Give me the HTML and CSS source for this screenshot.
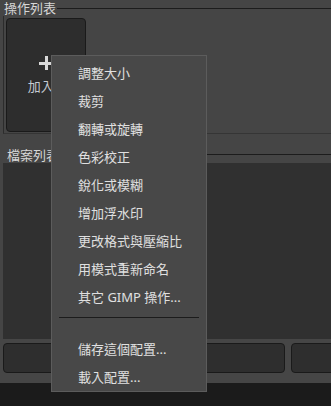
FILE: index.html
```html
<!DOCTYPE html>
<html lang="zh-Hant">
<head>
  <meta charset="UTF-8">
  <title>批次處理</title>
  <link rel="stylesheet" href="styles.css">
</head>
<body>

  <div class="group ops">
    <div class="group-title">
      <span>操作列表</span>
      <i class="rule"></i>
    </div>
    <div class="group-body">
      <button class="add-btn">
        <span class="plus"></span>
        <span class="add-label">加入...</span>
      </button>
    </div>
  </div>

  <div class="group files">
    <div class="group-title">
      <span>檔案列表</span>
      <i class="rule"></i>
    </div>
    <div class="file-list"></div>
    <div class="actions">
      <button class="act-btn"></button>
      <button class="act-btn"></button>
      <button class="act-btn"></button>
    </div>
  </div>

  <div class="statusbar"></div>

  <ul class="context-menu">
    <li>調整大小</li>
    <li>裁剪</li>
    <li>翻轉或旋轉</li>
    <li>色彩校正</li>
    <li>銳化或模糊</li>
    <li>增加浮水印</li>
    <li>更改格式與壓縮比</li>
    <li>用模式重新命名</li>
    <li>其它 GIMP 操作...</li>
    <li class="sep"></li>
    <li>儲存這個配置...</li>
    <li>載入配置...</li>
  </ul>

</body>
</html>
```

FILE: styles.css
```css
* {
  box-sizing: border-box;
}

body {
  margin: 0;
  width: 331px;
  height: 406px;
  overflow: hidden;
  background: #454545;
  color: #d6d6d6;
  font-family: "Noto Sans", "Noto Sans CJK TC", sans-serif;
  font-size: 13px;
  position: relative;
}

.group-title {
  display: flex;
  align-items: flex-start;
  height: 16px;
  line-height: 16px;
  white-space: nowrap;
}

.group-title span {
  padding-right: 1px;
}

.rule {
  flex: 1;
  height: 1px;
  margin-top: 8px;
  background: #1c1c1c;
}

.ops .group-title {
  padding-left: 4px;
}

.group-body {
  margin-left: 3px;
  padding: 2px 0 1px 2px;
  border-left: 1px solid #2c2c2c;
  border-bottom: 1px solid #353535;
}

.add-btn {
  width: 80px;
  height: 114px;
  display: flex;
  flex-direction: column;
  align-items: center;
  justify-content: center;
  gap: 8px;
  padding: 0;
  background: #2d2d2d;
  border: 1px solid #1a1a1a;
  border-radius: 4px;
  font: inherit;
  color: #c4cad2;
}

.plus {
  width: 14px;
  height: 14px;
  background:
    linear-gradient(#d8d8d8, #d8d8d8) center / 14px 3px no-repeat,
    linear-gradient(#d8d8d8, #d8d8d8) center / 3px 14px no-repeat;
}

.add-label {
  line-height: 16px;
}

.files .group-title {
  margin-top: 13px;
  padding-left: 7px;
}

.files .rule {
  margin-top: 7px;
}

.file-list {
  height: 176px;
  margin-left: 3px;
  background: #303030;
}

.actions {
  display: flex;
  gap: 6px;
  padding: 4px 0 10px 3px;
  background: #464646;
  overflow: hidden;
}

.act-btn {
  flex-shrink: 0;
  width: 138px;
  height: 30px;
  background: #2e2e2e;
  border: 1px solid #1a1a1a;
  border-radius: 4px;
}

.statusbar {
  height: 23px;
  background: #1b1b1b;
}

.context-menu {
  position: absolute;
  left: 51px;
  top: 55px;
  width: 156px;
  margin: 0;
  padding: 3px 0 0;
  list-style: none;
  background: #484848;
  border: 1px solid #5c5c5c;
  color: #e0e0e0;
}

.context-menu li {
  height: 28px;
  line-height: 28px;
  padding-left: 26px;
  white-space: nowrap;
}

.context-menu li.sep {
  height: 18px;
  padding: 0;
  margin: 0 7px;
  position: relative;
}

.context-menu li.sep::after {
  content: "";
  display: block;
  margin-top: 6px;
  height: 1px;
  background: #1c1c1c;
}
```
